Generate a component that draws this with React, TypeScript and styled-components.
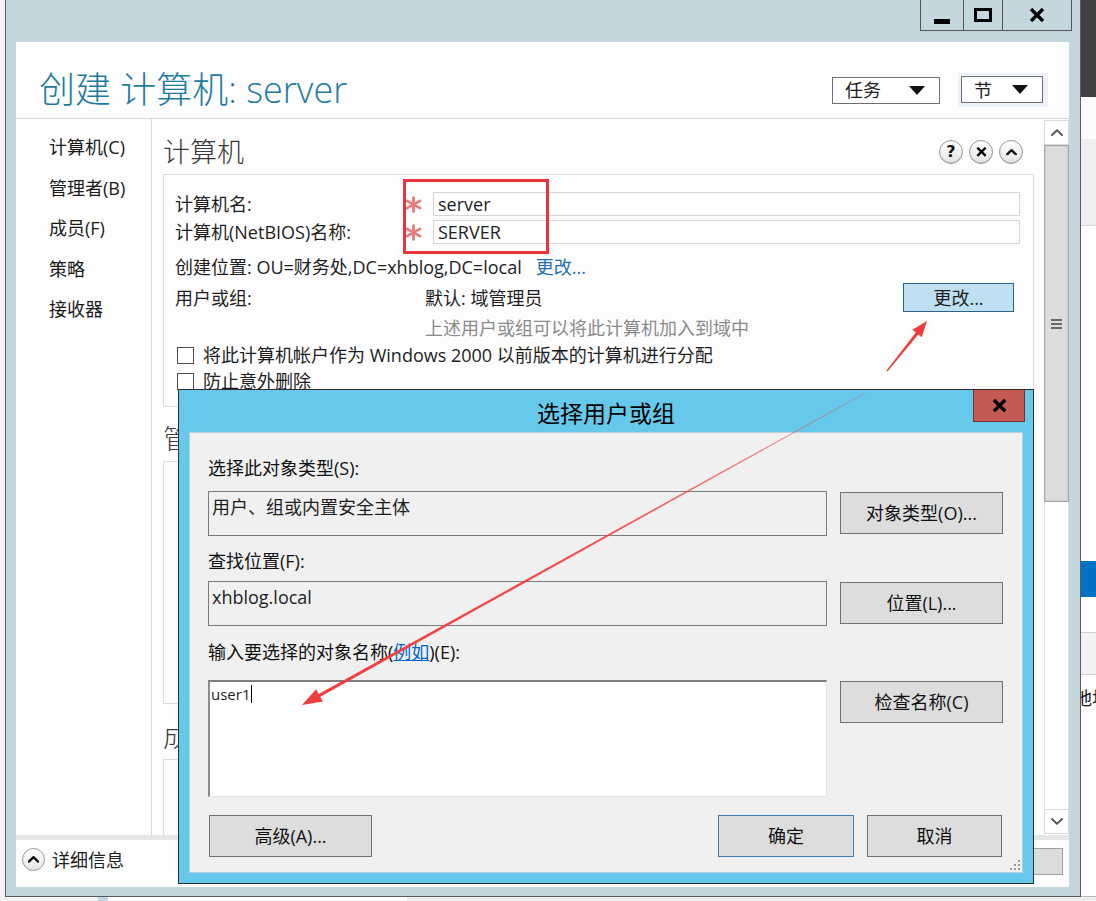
import React from 'react'
import styled, { createGlobalStyle } from 'styled-components'

const font = `"Open Sans", "Noto Sans CJK SC", sans-serif`

const GlobalStyle = createGlobalStyle`
  html, body { margin: 0; padding: 0; background: #f4f4f4; }
  body { font-family: ${font}; color: #1e1e1e; }
  * { box-sizing: border-box; }
`

const Page = styled.div`
  position: relative;
  width: 1096px;
  height: 901px;
  overflow: hidden;
  display: flex;
  flex-direction: column;
  font-size: 18px;
  line-height: 24px;
`

const Main = styled.div`
  display: flex;
  height: 897px;
`

const LeftStrip = styled.div`
  width: 5px;
  background: #f4f4f4;
`

const Window = styled.div`
  width: 1076px;
  background: #c4d7de;
  border: 1px solid #5b5b5b;
  border-top: none;
  padding: 0 11px 9px 10px;
  display: flex;
  flex-direction: column;
`

const TitleBar = styled.div`
  height: 42px;
  display: flex;
  justify-content: flex-end;
  align-items: flex-start;
  margin-right: -3px;
`

const WinControls = styled.div`
  display: flex;
  border: 1px solid #555;
  border-top: none;
`

const WinButton = styled.div<{ $w: number }>`
  width: ${p => p.$w}px;
  height: 30px;
  display: flex;
  align-items: center;
  justify-content: center;
  & + & { border-left: 1px solid #555; }
`

const MinGlyph = styled.div`
  width: 16px;
  height: 5px;
  background: #000;
  margin-top: 12px;
`

const MaxGlyph = styled.div`
  width: 18px;
  height: 14px;
  border: 3px solid #000;
`

const Client = styled.div`
  flex: 1;
  background: #fdfdfd;
  display: flex;
  flex-direction: column;
  overflow: hidden;
`

const Header = styled.div`
  height: 77px;
  border-bottom: 1px solid #d4d4d4;
  display: flex;
  align-items: center;
  justify-content: space-between;
  padding: 20px 21px 0 23px;
`

const PageTitle = styled.h1`
  margin: 0;
  font-size: 36px;
  line-height: 42px;
  font-weight: 300;
  color: #1d7ba0;
`

const HeaderTools = styled.div`
  display: flex;
  align-items: center;
  gap: 18px;
`

const Dropdown = styled.div<{ $w: number }>`
  width: ${p => p.$w}px;
  height: 27px;
  border: 1px solid #6f6f6f;
  background: #fff;
  display: flex;
  align-items: center;
  justify-content: space-between;
  padding: 0 14px 0 12px;
`

const Caret = styled.span`
  width: 0;
  height: 0;
  border-left: 8px solid transparent;
  border-right: 8px solid transparent;
  border-top: 9px solid #111;
`

const FocusGlow = styled.div`
  padding: 3px 5px 4px 3px;
  background: #edf2fc;
`

const Body = styled.div`
  flex: 1;
  display: flex;
  min-height: 0;
`

const Nav = styled.nav`
  width: 136px;
  border-right: 1px solid #dadada;
  padding: 16px 0 0 33px;
  display: flex;
  flex-direction: column;
  gap: 16.5px;
`

const NavItem = styled.div`
  color: #1a1a1a;
`

const Content = styled.div`
  flex: 1;
  overflow: hidden;
  padding: 16px 10px 0 11px;
`

const HeadingRow = styled.div`
  display: flex;
  align-items: center;
  justify-content: space-between;
  height: 34px;
`

const SectionHeading = styled.h2<{ $mt?: number }>`
  margin: ${p => p.$mt ?? 0}px 0 0;
  font-size: 27px;
  line-height: 34px;
  font-weight: 300;
  color: #3a3a3a;
`

const RoundTools = styled.div`
  display: flex;
  gap: 6px;
  margin-right: 11px;
`

const RoundIcon = styled.div`
  width: 24px;
  height: 24px;
  border-radius: 50%;
  border: 1px solid #9a9a9a;
  background: linear-gradient(#ffffff, #e4e4e4);
  box-shadow: inset 0 -1px 0 #c4c4c4;
  display: flex;
  align-items: center;
  justify-content: center;
  font-family: "DejaVu Sans", sans-serif;
  font-weight: bold;
  font-size: 16px;
  color: #111;
`

const SectionBox = styled.div<{ $h?: number }>`
  margin-top: 5px;
  border: 1px solid #dcdcdc;
  padding: 17px 13px 12px 11px;
  ${p => (p.$h ? `height: ${p.$h}px;` : '')}
`

const FieldRow = styled.div<{ $mt?: number }>`
  display: flex;
  align-items: center;
  height: 24px;
  margin-top: ${p => p.$mt ?? 0}px;
`

const FieldLabel = styled.span<{ $w: number }>`
  width: ${p => p.$w}px;
  flex-shrink: 0;
`

const Required = styled.span`
  width: 30px;
  display: flex;
  align-items: center;
  padding-left: 2px;
`

const TextInput = styled.div`
  flex: 1;
  height: 24px;
  border: 1px solid #d5d5d5;
  background: #fff;
  padding-left: 4px;
  line-height: 22px;
`

const TextLink = styled.span`
  color: #1f6fb2;
  margin-left: 14px;
`

const ActionRow = styled.div`
  display: flex;
  align-items: center;
  height: 29px;
  margin-top: 4px;
  padding-right: 6px;
`

const ChangeButton = styled.div`
  margin-left: auto;
  width: 111px;
  height: 29px;
  border: 1px solid #2c628b;
  background: #bee0f1;
  display: flex;
  align-items: center;
  justify-content: center;
`

const Hint = styled.div`
  margin-top: 4px;
  padding-left: 250px;
  color: #8a8a8a;
`

const CheckRow = styled.label<{ $mt?: number }>`
  display: flex;
  align-items: center;
  gap: 9px;
  height: 26px;
  margin-top: ${p => p.$mt ?? 0}px;
  padding-left: 2px;
`

const CheckBox = styled.span`
  width: 17px;
  height: 17px;
  border: 1px solid #4d4d4d;
  background: #fff;
`

const ScrollBar = styled.div`
  width: 25px;
  margin: 1px 0;
  display: flex;
  flex-direction: column;
`

const ScrollArrow = styled.div`
  height: 25px;
  background: #fff;
  border: 1px solid #dadada;
  display: flex;
  align-items: center;
  justify-content: center;
`

const ScrollThumb = styled.div`
  height: 357px;
  background: #dcdcdc;
  border: 1px solid #a6a6a6;
  box-shadow: inset 0 0 0 1px #cfcfcf;
  display: flex;
  flex-direction: column;
  align-items: center;
  justify-content: center;
  gap: 2px;
`

const GripLine = styled.span`
  width: 11px;
  height: 2px;
  background: #6a6a6a;
`

const ScrollTrack = styled.div`
  flex: 1;
  background: #fff;
  border-left: 1px solid #e2e2e2;
  border-right: 1px solid #e2e2e2;
`

const Footer = styled.div`
  height: 52px;
  border-top: 5px solid #e6e6e6;
  display: flex;
  align-items: center;
  padding: 0 6px 8px;
  gap: 7px;
`

const FooterToggle = styled.div`
  width: 23px;
  height: 23px;
  border-radius: 50%;
  border: 1px solid #999;
  background: linear-gradient(#fff, #e6e6e6);
  display: flex;
  align-items: center;
  justify-content: center;
`

const FooterButtons = styled.div`
  margin-left: auto;
  display: flex;
  gap: 10px;
  margin-top: 4px;
`

const FooterButton = styled.div`
  width: 100px;
  height: 27px;
  border: 1px solid #a0a0a0;
  background: #dcdcdc;
`

const RightStrip = styled.div`
  width: 15px;
  display: flex;
  flex-direction: column;
  background: #fff;
  overflow: hidden;
`

const StripBand = styled.div<{ $h: number; $bg: string; $line?: string }>`
  height: ${p => p.$h}px;
  flex-shrink: 0;
  background: ${p => p.$bg};
  ${p => (p.$line ? `border-bottom: 1px solid ${p.$line};` : '')}
`

const StripText = styled.div`
  height: 45px;
  display: flex;
  align-items: center;
  margin-left: -7px;
  white-space: nowrap;
  color: #111;
`

const StripFill = styled.div`
  flex: 1;
  border-bottom: 1px solid #b8b8b8;
`

const BottomStrip = styled.div`
  height: 4px;
  display: flex;
`

const BottomPart = styled.div<{ $w?: number; $bg: string }>`
  ${p => (p.$w ? `width: ${p.$w}px;` : 'flex: 1;')}
  background: ${p => p.$bg};
`

/* ---------- dialog ---------- */

const Dialog = styled.div`
  position: absolute;
  left: 178px;
  top: 389px;
  width: 856px;
  height: 495px;
  background: #66c9eb;
  border: 1px solid #2e2e2e;
  padding: 0 10px 10px;
  display: flex;
  flex-direction: column;
`

const DialogTitle = styled.div`
  height: 42px;
  display: flex;
  align-items: center;
  justify-content: center;
  font-size: 23px;
  color: #000;
  padding-top: 4px;
`

const DialogClose = styled.div`
  position: absolute;
  top: 0;
  right: 8px;
  width: 52px;
  height: 32px;
  background: #c45a52;
  border: 1px solid #7a302b;
  border-top: none;
  display: flex;
  align-items: center;
  justify-content: center;
`

const DialogPanel = styled.div`
  position: relative;
  flex: 1;
  background: #f0f0f0;
  border: 1px solid #b3d0dd;
  padding: 23px 19px 15px 18px;
  display: flex;
  flex-direction: column;
`

const DialogLabel = styled.div<{ $mt?: number }>`
  margin-top: ${p => p.$mt ?? 0}px;
  color: #111;
`

const DialogRow = styled.div<{ $mt: number }>`
  display: grid;
  grid-template-columns: 619px 163px;
  column-gap: 13px;
  align-items: start;
  margin-top: ${p => p.$mt}px;
`

const ReadField = styled.div`
  height: 45px;
  border: 1px solid #7a7a7a;
  background: #f0f0f0;
  padding: 3px 0 0 3px;
`

const NameArea = styled.div`
  height: 117px;
  background: #fff;
  border-top: 2px solid #7e7e7e;
  border-left: 2px solid #8c8c8c;
  border-right: 1px solid #e2e2e2;
  border-bottom: 1px solid #e2e2e2;
  padding: 3px 0 0 1px;
  font-size: 15px;
  line-height: 18px;
  display: flex;
  align-items: flex-start;
`

const TextCaret = styled.span`
  width: 1px;
  height: 18px;
  background: #000;
  margin-left: 1px;
`

const DialogButton = styled.div<{ $w?: number; $primary?: boolean }>`
  width: ${p => (p.$w ? `${p.$w}px` : 'auto')};
  height: 42px;
  margin-top: 1px;
  border: 1px solid ${p => (p.$primary ? '#3c7fb1' : '#707070')};
  background: #dddddd;
  display: flex;
  align-items: center;
  justify-content: center;
  color: #111;
`

const DialogFooter = styled.div`
  display: flex;
  margin-top: 17px;
  padding-left: 1px;
`

const FooterRight = styled.div`
  margin-left: auto;
  display: flex;
  gap: 13px;
  margin-right: 1px;
`

const ExampleLink = styled.span`
  color: #0066cc;
  text-decoration: underline;
`

const Grip = styled.svg`
  position: absolute;
  right: 2px;
  bottom: 2px;
`

/* ---------- annotations ---------- */

const Highlight = styled.div`
  position: absolute;
  left: 403px;
  top: 179px;
  width: 146px;
  height: 75px;
  border: 3px solid #e8343a;
`

const Overlay = styled.svg`
  position: absolute;
  left: 0;
  top: 0;
  pointer-events: none;
`

const Chevron = ({ up = true, color = '#111', w = 12, sw = 2 }: { up?: boolean; color?: string; w?: number; sw?: number }) => (
  <svg width={w} height={w * 0.6} viewBox="0 0 12 7" fill="none">
    <polyline
      points={up ? '1,6 6,1.2 11,6' : '1,1 6,5.8 11,1'}
      stroke={color}
      strokeWidth={sw}
      strokeLinecap="round"
      strokeLinejoin="round"
    />
  </svg>
)

const Cross = ({ size = 16, sw = 3 }: { size?: number; sw?: number }) => (
  <svg width={size} height={size * 0.875} viewBox="0 0 16 14">
    <path d="M2 1 L14 13 M14 1 L2 13" stroke="#000" strokeWidth={sw} />
  </svg>
)

const Asterisk = () => (
  <svg width="17" height="17" viewBox="0 0 16 16">
    <g stroke="#e77b7b" strokeWidth="2.6" strokeLinecap="round">
      <path d="M8 1.5 V14.5" />
      <path d="M1.8 4.6 L14.2 11.4" />
      <path d="M14.2 4.6 L1.8 11.4" />
    </g>
  </svg>
)

const navItems = ['计算机(C)', '管理者(B)', '成员(F)', '策略', '接收器']

export default function App() {
  return (
    <>
      <GlobalStyle />
      <Page>
        <Main>
          <LeftStrip />
          <Window>
            <TitleBar>
              <WinControls>
                <WinButton $w={42}>
                  <MinGlyph />
                </WinButton>
                <WinButton $w={39}>
                  <MaxGlyph />
                </WinButton>
                <WinButton $w={69}>
                  <Cross sw={3.4} />
                </WinButton>
              </WinControls>
            </TitleBar>
            <Client>
              <Header>
                <PageTitle>创建 计算机: server</PageTitle>
                <HeaderTools>
                  <Dropdown $w={108}>
                    任务
                    <Caret />
                  </Dropdown>
                  <FocusGlow>
                    <Dropdown $w={82}>
                      节
                      <Caret />
                    </Dropdown>
                  </FocusGlow>
                </HeaderTools>
              </Header>
              <Body>
                <Nav>
                  {navItems.map(n => (
                    <NavItem key={n}>{n}</NavItem>
                  ))}
                </Nav>
                <Content>
                  <HeadingRow>
                    <SectionHeading>计算机</SectionHeading>
                    <RoundTools>
                      <RoundIcon>?</RoundIcon>
                      <RoundIcon>
                        <Cross size={11} sw={3.4} />
                      </RoundIcon>
                      <RoundIcon>
                        <Chevron w={11} sw={2.6} />
                      </RoundIcon>
                    </RoundTools>
                  </HeadingRow>
                  <SectionBox>
                    <FieldRow>
                      <FieldLabel $w={228}>计算机名:</FieldLabel>
                      <Required>
                        <Asterisk />
                      </Required>
                      <TextInput>server</TextInput>
                    </FieldRow>
                    <FieldRow $mt={4}>
                      <FieldLabel $w={228}>计算机(NetBIOS)名称:</FieldLabel>
                      <Required>
                        <Asterisk />
                      </Required>
                      <TextInput>SERVER</TextInput>
                    </FieldRow>
                    <FieldRow $mt={11}>
                      创建位置: OU=财务处,DC=xhblog,DC=local
                      <TextLink>更改...</TextLink>
                    </FieldRow>
                    <ActionRow>
                      <FieldLabel $w={250}>用户或组:</FieldLabel>
                      默认: 域管理员
                      <ChangeButton>更改...</ChangeButton>
                    </ActionRow>
                    <Hint>上述用户或组可以将此计算机加入到域中</Hint>
                    <CheckRow $mt={2}>
                      <CheckBox />
                      将此计算机帐户作为 Windows 2000 以前版本的计算机进行分配
                    </CheckRow>
                    <CheckRow>
                      <CheckBox />
                      防止意外删除
                    </CheckRow>
                  </SectionBox>
                  <SectionHeading $mt={15}>管理者</SectionHeading>
                  <SectionBox $h={243} />
                  <SectionHeading $mt={16}>成员</SectionHeading>
                  <SectionBox $h={160} />
                </Content>
                <ScrollBar>
                  <ScrollArrow>
                    <Chevron color="#5a5a5a" w={12} sw={2} />
                  </ScrollArrow>
                  <ScrollThumb>
                    <GripLine />
                    <GripLine />
                    <GripLine />
                  </ScrollThumb>
                  <ScrollTrack />
                  <ScrollArrow>
                    <Chevron up={false} color="#5a5a5a" w={12} sw={2} />
                  </ScrollArrow>
                </ScrollBar>
              </Body>
              <Footer>
                <FooterToggle>
                  <Chevron w={11} sw={2.6} />
                </FooterToggle>
                详细信息
                <FooterButtons>
                  <FooterButton />
                  <FooterButton />
                </FooterButtons>
              </Footer>
            </Client>
          </Window>
          <RightStrip>
            <StripBand $h={97} $bg="#404040" />
            <StripBand $h={42} $bg="#fcfcfc" />
            <StripBand $h={87} $bg="#efefef" $line="#d6d6d6" />
            <StripBand $h={335} $bg="#ffffff" />
            <StripBand $h={36} $bg="#0072c6" />
            <StripBand $h={36} $bg="#ffffff" $line="#d0d0d0" />
            <StripBand $h={42} $bg="#f2f2f2" $line="#d0d0d0" />
            <StripText>地址</StripText>
            <StripFill />
          </RightStrip>
        </Main>
        <BottomStrip>
          <BottomPart $w={98} $bg="#f4f4f4" />
          <BottomPart $w={10} $bg="#c4d7de" />
          <BottomPart $w={299} $bg="#ffffff" />
          <BottomPart $bg="#ececec" />
        </BottomStrip>

        <Dialog>
          <DialogTitle>选择用户或组</DialogTitle>
          <DialogClose>
            <Cross size={15} sw={3.6} />
          </DialogClose>
          <DialogPanel>
            <DialogLabel>选择此对象类型(S):</DialogLabel>
            <DialogRow $mt={11}>
              <ReadField>用户、组或内置安全主体</ReadField>
              <DialogButton>对象类型(O)...</DialogButton>
            </DialogRow>
            <DialogLabel $mt={13}>查找位置(F):</DialogLabel>
            <DialogRow $mt={8}>
              <ReadField>xhblog.local</ReadField>
              <DialogButton>位置(L)...</DialogButton>
            </DialogRow>
            <DialogLabel $mt={14}>
              输入要选择的对象名称(<ExampleLink>例如</ExampleLink>)(E):
            </DialogLabel>
            <DialogRow $mt={16}>
              <NameArea>
                user1
                <TextCaret />
              </NameArea>
              <DialogButton>检查名称(C)</DialogButton>
            </DialogRow>
            <DialogFooter>
              <DialogButton $w={163}>高级(A)...</DialogButton>
              <FooterRight>
                <DialogButton $w={136} $primary>
                  确定
                </DialogButton>
                <DialogButton $w={135}>取消</DialogButton>
              </FooterRight>
            </DialogFooter>
            <Grip width="10" height="10" viewBox="0 0 10 10">
              <g fill="#9a9a9a">
                <rect x="8" y="0" width="2" height="2" />
                <rect x="4" y="4" width="2" height="2" />
                <rect x="8" y="4" width="2" height="2" />
                <rect x="0" y="8" width="2" height="2" />
                <rect x="4" y="8" width="2" height="2" />
                <rect x="8" y="8" width="2" height="2" />
              </g>
            </Grip>
          </DialogPanel>
        </Dialog>

        <Highlight />
        <Overlay width="1096" height="901" viewBox="0 0 1096 901">
          <defs>
            <linearGradient id="fade" x1="865" y1="393" x2="302" y2="705" gradientUnits="userSpaceOnUse">
              <stop offset="0" stopColor="#f03c3c" stopOpacity="0.45" />
              <stop offset="0.5" stopColor="#f03c3c" stopOpacity="0.9" />
              <stop offset="1" stopColor="#f03c3c" />
            </linearGradient>
          </defs>
          <polygon
            fill="#f03c3c"
            points="887.5,371.4 918.2,334.4 921.7,337.2 927,321 912.3,329.8 915.8,332.6 886.5,370.6"
          />
          <polygon
            fill="url(#fade)"
            points="865.2,393.3 320.3,696.7 322.9,701.4 302,705 316.1,689.2 318.7,693.9 864.8,392.7"
          />
        </Overlay>
      </Page>
    </>
  )
}
